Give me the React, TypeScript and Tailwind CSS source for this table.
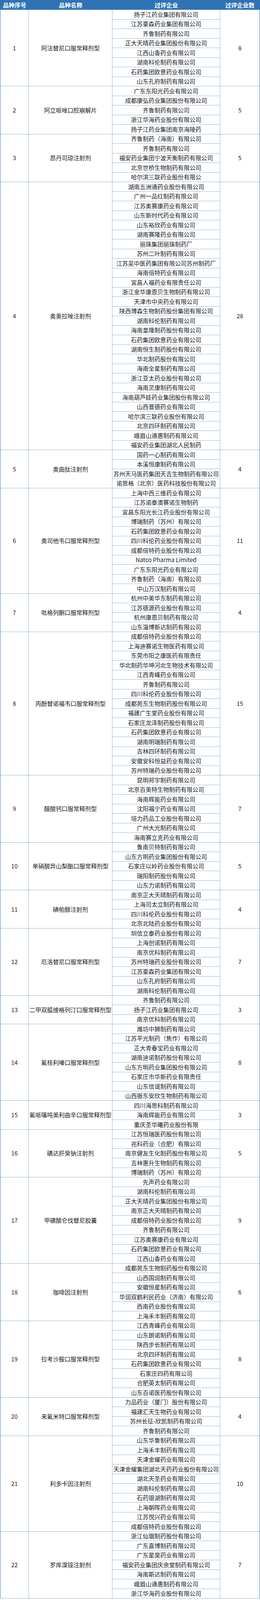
import React from 'react';

type Item = { name: string; companies: string[] };

const items: Item[] = [
  {
    name: '阿法替尼口服常释剂型',
    companies: [
      '扬子江药业集团有限公司',
      '江苏豪森药业集团有限公司',
      '齐鲁制药有限公司',
      '正大天晴药业集团股份有限公司',
      '江西山香药业有限公司',
      '湖南科伦制药有限公司',
      '石药集团欧意药业有限公司',
      '山东孔府制药有限公司',
    ],
  },
  {
    name: '阿立哌唑口腔崩解片',
    companies: [
      '广东东阳光药业有限公司',
      '成都康弘药业集团股份有限公司',
      '齐鲁制药有限公司',
      '浙江华海药业股份有限公司',
      '扬子江药业集团南京海陵药',
    ],
  },
  {
    name: '昂丹司琼注射剂',
    companies: [
      '齐鲁制药（海南）有限公司',
      '齐鲁制药有限公司',
      '福安药业集团宁波天衡制药有限公司',
      '北京世桥生物制药有限公司',
      '哈尔滨三联药业股份有限公',
    ],
  },
  {
    name: '奥美拉唑注射剂',
    companies: [
      '湖南五洲通药业股份有限公司',
      '广州一品红制药有限公司',
      '江苏奥赛康药业有限公司',
      '山东新时代药业有限公司',
      '山东裕欣药业有限公司',
      '湖南赛隆药业有限公司',
      '丽珠集团丽珠制药厂',
      '苏州二叶制药有限公司',
      '江苏吴中医药集团有限公司苏州制药厂',
      '海南倍特药业有限公司',
      '宜昌人福药业有限责任公司',
      '浙江金华康恩贝生物制药有限公司',
      '天津市中央药业有限公司',
      '陕西博森生物制药股份集团有限公司',
      '湖南科伦制药有限公司',
      '海南皇隆制药股份有限公司',
      '石药集团欧意药业有限公司',
      '湖南恒生制药股份有限公司',
      '华北制药股份有限公司',
      '海南全星制药有限公司',
      '浙江亚太药业股份有限公司',
      '海南灵康制药有限公司',
      '海南葫芦娃药业集团股份有限公司',
      '山西普德药业有限公司',
      '哈尔滨三联药业股份有限公司',
      '北京四环制药有限公司',
      '峨眉山通惠制药有限公司',
      '福安药业集团湖北人民制药',
    ],
  },
  {
    name: '奥曲肽注射剂',
    companies: [
      '国药一心制药有限公司',
      '本溪恒康制药有限公司',
      '苏州天马医药集团天吉生物制药有限公司',
      '诺思格（北京）医药科技股份有限公司',
    ],
  },
  {
    name: '奥司他韦口服常释剂型',
    companies: [
      '上海中西三维药业有限公司',
      '江苏诺泰澳赛诺生物制药',
      '宜昌东阳光长江药业股份有限公司',
      '博瑞制药（苏州）有限公司',
      '石药集团欧意药业有限公司',
      '四川科伦药业股份有限公司',
      '成都倍特药业股份有限公司',
      'Natco Pharma Limited',
      '广东东阳光药业有限公司',
      '齐鲁制药（海南）有限公司',
      '中山万汉制药有限公司',
    ],
  },
  {
    name: '吡格列酮口服常释剂型',
    companies: [
      '杭州中美华东制药有限公司',
      '江苏德源药业股份有限公司',
      '杭州康恩贝制药有限公司',
      '山东淄博新达制药有限公司',
    ],
  },
  {
    name: '丙酚替诺福韦口服常释剂型',
    companies: [
      '成都倍特药业股份有限公司',
      '上海迪赛诺生物医药有限公司',
      '东莞市阳之康医药有限责任',
      '华北制药华坤河北生物技术有限公司',
      '江西青峰药业有限公司',
      '齐鲁制药有限公司',
      '四川科伦药业股份有限公司',
      '成都苑东生物制药股份有限公司',
      '福建广生堂药业股份有限公司',
      '石家庄龙泽制药股份有限公司',
      '石药集团欧意药业有限公司',
      '湖南明瑞制药有限公司',
      '吉林四环制药有限公司',
      '安徽安科恒益药业有限公司',
      '苏州特瑞药业股份有限公司',
    ],
  },
  {
    name: '醋酸钙口服常释剂型',
    companies: [
      '昆明邦宇制药有限公司',
      '北京百美特生物制药有限公司',
      '海南辉能药业有限公司',
      '沈阳福宁药业有限公司',
      '培力药品工业股份有限公司',
      '广州大光制药有限公司',
      '海南赛立克药业有限公司',
    ],
  },
  {
    name: '单硝酸异山梨酯口服常释剂型',
    companies: [
      '鲁南贝特制药有限公司',
      '山东方明药业集团股份有限公司',
      '石家庄以岭药业股份有限公司',
      '瑞阳制药股份有限公司',
      '山东力诺制药有限公司',
    ],
  },
  {
    name: '碘帕醇注射剂',
    companies: [
      '南京正大天晴制药有限公司',
      '上海司太立制药有限公司',
      '四川科伦药业股份有限公司',
      '北京北陆药业股份有限公司',
    ],
  },
  {
    name: '厄洛替尼口服常释剂型',
    companies: [
      '圳信立泰药业股份有限公司',
      '上海创诺制药有限公司',
      '南京优科制药有限公司',
      '苏州特瑞药业股份有限公司',
      '江苏豪森药业集团有限公司',
      '山东孔府制药有限公司',
      '湖南科伦制药有限公司',
    ],
  },
  {
    name: '二甲双胍维格列汀口服常释剂型',
    companies: ['齐鲁制药有限公司', '扬子江药业集团有限公司', '南京优科制药有限公司'],
  },
  {
    name: '氟桂利嗪口服常释剂型',
    companies: [
      '潍坊中狮制药有限公司',
      '江苏平光制药（焦作）有限公司',
      '正大青春宝药业有限公司',
      '湖南迪诺制药股份有限公司',
      '山东方明药业集团股份有限公司',
      '石家庄市华新药业有限责任',
      '山东信谊制药有限公司',
      '山西振东安欣生物制药有限公司',
    ],
  },
  {
    name: '氟哌噻吨美利曲辛口服常释剂型',
    companies: ['四川海思科制药有限公司', '海南辉能药业有限公司', '重庆圣华曦药业股份有限'],
  },
  {
    name: '磺达肝癸钠注射剂',
    companies: [
      '江苏恒瑞医药股份有限公司',
      '兆科药业（合肥）有限公司',
      '南京健友生化制药股份有限公司',
      '吉林惠升生物制药有限公司',
      '博瑞制药（苏州）有限公司',
    ],
  },
  {
    name: '甲磺酸仑伐替尼胶囊',
    companies: [
      '先声药业有限公司',
      '湖南科伦制药有限公司',
      '正大天晴药业集团股份有限公司',
      '南京正大天晴制药有限公司',
      '成都倍特药业股份有限公司',
      '齐鲁制药有限公司',
      '江苏奥赛康药业有限公司',
      '石药集团欧意药业有限公司',
      '江西山香药业有限公司',
    ],
  },
  {
    name: '咖啡因注射剂',
    companies: [
      '成都苑东生物制药股份有限公司',
      '山西国润制药有限公司',
      '安徽恒星制药有限公司',
      '华润双鹤利民药业（济南）有限公司',
      '西南药业股份有限公司',
      '上海禾丰制药有限公司',
    ],
  },
  {
    name: '拉考沙胺口服常释剂型',
    companies: [
      '江西青峰药业有限公司',
      '山东朗诺制药有限公司',
      '陕西步长制药有限公司',
      '北京四环制药有限公司',
      '石药集团欧意药业有限公司',
      '石家庄四药有限公司',
      '合肥英太制药有限公司',
      '山东百诺医药股份有限公司',
    ],
  },
  {
    name: '来氟米特口服常释剂型',
    companies: [
      '力品药业（厦门）股份有限公司',
      '福建汇天生物药业有限公司',
      '苏州长征-欣凯制药有限公司',
      '齐鲁制药有限公司',
    ],
  },
  {
    name: '利多卡因注射剂',
    companies: [
      '山东华鲁制药有限公司',
      '上海禾丰制药有限公司',
      '天津金耀药业有限公司',
      '天津金耀集团湖北天药药业股份有限公司',
      '湖北天圣药业有限公司',
      '湖南科伦制药有限公司',
      '石药银湖制药有限公司',
      '上海朝晖药业有限公司',
      '江苏悦兴药业有限公司',
      '成都倍特药业股份有限公司',
    ],
  },
  {
    name: '罗库溴铵注射剂',
    companies: [
      '浙江仙琚制药股份有限公司',
      '广东嘉博制药有限公司',
      '广东星昊药业有限公司',
      '福安药业集团庆余堂制药有限公司',
      '海南斯达制药有限公司',
      '峨眉山通惠制药有限公司',
      '浙江华海药业股份有限公司',
    ],
  },
];

// the browser frame is only 4096px tall, so rows are compressed to keep the
// whole table (header + 166 rows) in view
const ROW = 24.5;

const line = 'border-dotted border-[#2f73b5]';

const App: React.FC = () => {
  return (
    <div
      className="w-[666px] bg-[#fff] text-[15px] leading-[20px] text-[#1a1a1a] border-x border-solid border-[#2f73b5]"
      style={{ fontFamily: '"Noto Sans CJK SC", "Noto Sans", sans-serif' }}
    >
      {/* Header */}
      <div className="flex h-[25px] bg-[#2f73b5] text-[#fff] font-[700] items-center">
        <div className="w-[73px] text-center">品种序号</div>
        <div className="w-[214px] text-center">品种名称</div>
        <div className="w-[276px] text-center">过评企业</div>
        <div className="flex-1 text-center">过评企业数</div>
      </div>

      {/* Rows */}
      {items.map((item, idx) => (
        <div key={idx} className="flex" style={{ height: item.companies.length * ROW }}>
          <div className={`w-[73px] flex items-center justify-center border-r border-b ${line}`}>
            {idx + 1}
          </div>
          <div className={`w-[214px] flex items-center justify-center whitespace-nowrap border-r border-b ${line}`}>
            {item.name}
          </div>
          <div className={`w-[276px] flex flex-col border-r ${line}`}>
            {item.companies.map((c, i) => (
              <div
                key={i}
                className={`h-[24.5px] shrink-0 flex items-center justify-center whitespace-nowrap border-b ${line}`}
              >
                {c}
              </div>
            ))}
          </div>
          <div className={`flex-1 flex items-center justify-center border-b ${line}`}>
            {item.companies.length}
          </div>
        </div>
      ))}
    </div>
  );
};

export default App;
